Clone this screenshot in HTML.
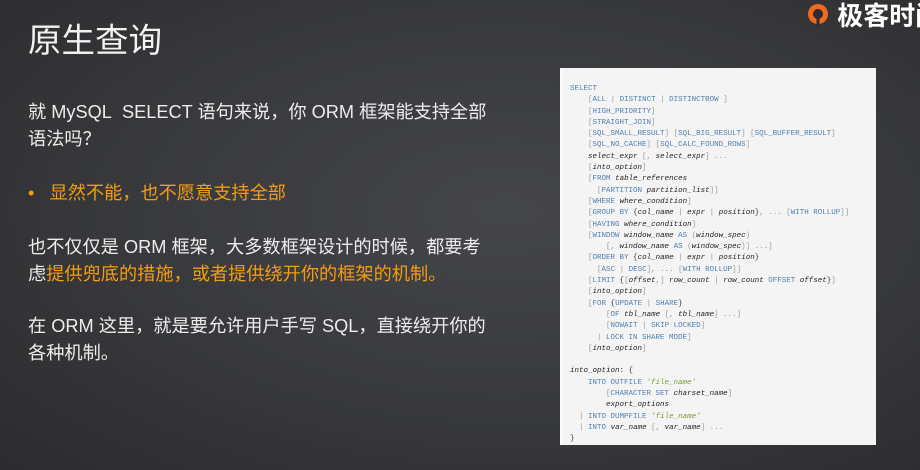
<!DOCTYPE html>
<html><head><meta charset="utf-8"><style>
*{margin:0;padding:0;box-sizing:border-box}
body{width:920px;height:470px;overflow:hidden;background:radial-gradient(ellipse at 55% 45%,#45464a 0%,#3a3b3e 45%,#2c2c2e 100%);font-family:"Liberation Sans","Noto Sans CJK SC",sans-serif;position:relative;color:#f2f2f2}
.t{position:absolute;left:28px;top:13px;font-size:33.5px;white-space:nowrap}
.p{position:absolute;left:28px;font-size:18.2px;line-height:27px;white-space:nowrap;color:#ededed}
.o{color:#f39c12}
.logo{position:absolute;left:806px;top:-4px;font-size:26px;font-weight:bold;color:#fff;white-space:nowrap}
.code{position:absolute;left:560px;top:68px;width:316px;height:377px;background:#f4f4f4;border-left:3px solid #fafafa}
pre{position:absolute;left:7px;top:16px;font-family:"Liberation Mono","DejaVu Sans Mono",monospace;font-size:7.5px;line-height:11.3px;color:#333}
.k{color:#4f7fb0}.b{color:#999}i{color:#222}.s{color:#7a9a3a;font-style:italic}
</style></head><body>
<div class="t">原生查询</div>
<div class="logo"><svg width="24" height="26" viewBox="0 0 24 26" style="vertical-align:-4px"><circle cx="12" cy="11" r="10" fill="#f06a1d"/><circle cx="12" cy="11" r="5" fill="#2c2c2e"/><rect x="10.5" y="11" width="3" height="12" fill="#2c2c2e"/></svg> 极客时间</div>
<div class="p" style="top:99px">就 MySQL&nbsp; SELECT 语句来说，你 ORM 框架能支持全部<br>语法吗？</div>
<div class="p o" style="top:180px">•&nbsp;&nbsp;&nbsp;显然不能，也不愿意支持全部</div>
<div class="p" style="top:234px">也不仅仅是 ORM 框架，大多数框架设计的时候，都要考<br>虑<span class="o">提供兜底的措施，或者提供绕开你的框架的机制。</span></div>
<div class="p" style="top:313px">在 ORM 这里，就是要允许用户手写 SQL，直接绕开你的<br>各种机制。</div>
<div class="code"><pre><span class="k">SELECT</span>
    <span class="b">[</span><span class="k">ALL</span> <span class="b">|</span> <span class="k">DISTINCT</span> <span class="b">|</span> <span class="k">DISTINCTROW</span> <span class="b">]</span>
    <span class="b">[</span><span class="k">HIGH_PRIORITY</span><span class="b">]</span>
    <span class="b">[</span><span class="k">STRAIGHT_JOIN</span><span class="b">]</span>
    <span class="b">[</span><span class="k">SQL_SMALL_RESULT</span><span class="b">]</span> <span class="b">[</span><span class="k">SQL_BIG_RESULT</span><span class="b">]</span> <span class="b">[</span><span class="k">SQL_BUFFER_RESULT</span><span class="b">]</span>
    <span class="b">[</span><span class="k">SQL_NO_CACHE</span><span class="b">]</span> <span class="b">[</span><span class="k">SQL_CALC_FOUND_ROWS</span><span class="b">]</span>
    <i>select_expr</i> <span class="b">[, </span><i>select_expr</i><span class="b">] ...</span>
    <span class="b">[</span><i>into_option</i><span class="b">]</span>
    <span class="b">[</span><span class="k">FROM</span> <i>table_references</i>
      <span class="b">[</span><span class="k">PARTITION</span> <i>partition_list</i><span class="b">]]</span>
    <span class="b">[</span><span class="k">WHERE</span> <i>where_condition</i><span class="b">]</span>
    <span class="b">[</span><span class="k">GROUP BY</span> {<i>col_name</i> <span class="b">|</span> <i>expr</i> <span class="b">|</span> <i>position</i>}<span class="b">, ... [</span><span class="k">WITH ROLLUP</span><span class="b">]]</span>
    <span class="b">[</span><span class="k">HAVING</span> <i>where_condition</i><span class="b">]</span>
    <span class="b">[</span><span class="k">WINDOW</span> <i>window_name</i> <span class="k">AS</span> <span class="b">(</span><i>window_spec</i><span class="b">)</span>
        <span class="b">[, </span><i>window_name</i> <span class="k">AS</span> <span class="b">(</span><i>window_spec</i><span class="b">)] ...]</span>
    <span class="b">[</span><span class="k">ORDER BY</span> {<i>col_name</i> <span class="b">|</span> <i>expr</i> <span class="b">|</span> <i>position</i>}
      <span class="b">[</span><span class="k">ASC</span> <span class="b">|</span> <span class="k">DESC</span><span class="b">], ... [</span><span class="k">WITH ROLLUP</span><span class="b">]]</span>
    <span class="b">[</span><span class="k">LIMIT</span> {<span class="b">[</span><i>offset</i><span class="b">,]</span> <i>row_count</i> <span class="b">|</span> <i>row_count</i> <span class="k">OFFSET</span> <i>offset</i>}<span class="b">]</span>
    <span class="b">[</span><i>into_option</i><span class="b">]</span>
    <span class="b">[</span><span class="k">FOR</span> {<span class="k">UPDATE</span> <span class="b">|</span> <span class="k">SHARE</span>}
        <span class="b">[</span><span class="k">OF</span> <i>tbl_name</i> <span class="b">[, </span><i>tbl_name</i><span class="b">] ...]</span>
        <span class="b">[</span><span class="k">NOWAIT</span> <span class="b">|</span> <span class="k">SKIP LOCKED</span><span class="b">]</span>
      <span class="b">|</span> <span class="k">LOCK IN SHARE MODE</span><span class="b">]</span>
    <span class="b">[</span><i>into_option</i><span class="b">]</span>

<i>into_option</i>: {
    <span class="k">INTO OUTFILE</span> <span class="s">'file_name'</span>
        <span class="b">[</span><span class="k">CHARACTER SET</span> <i>charset_name</i><span class="b">]</span>
        <i>export_options</i>
  <span class="b">|</span> <span class="k">INTO DUMPFILE</span> <span class="s">'file_name'</span>
  <span class="b">|</span> <span class="k">INTO</span> <i>var_name</i> <span class="b">[, </span><i>var_name</i><span class="b">] ...</span>
}</pre></div>
</body></html>
